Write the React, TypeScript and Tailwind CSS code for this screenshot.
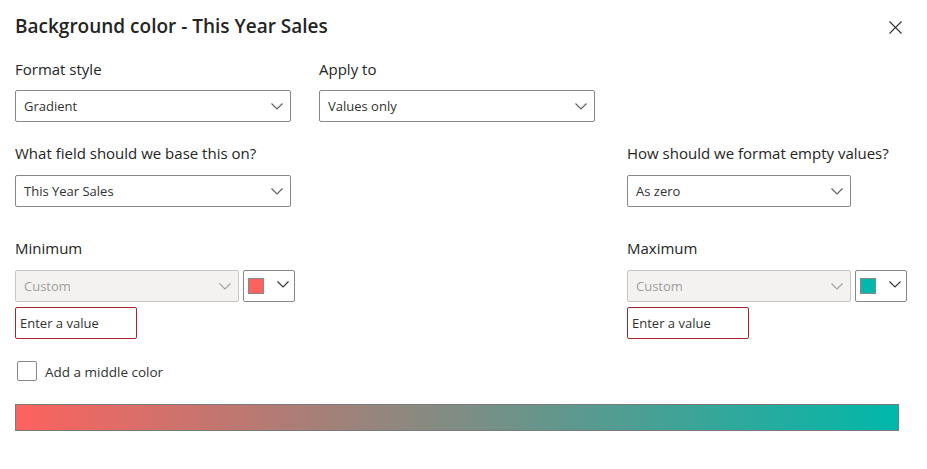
const Chevron = ({ color = "#605e5c" }: { color?: string }) => (
    <svg width="12" height="7" viewBox="0 0 12 7" fill="none">
        <path d="M0.5 0.5 L6 6 L11.5 0.5" stroke={color} strokeWidth="1.1" />
    </svg>
)

const Dropdown = ({ value, width }: { value: string, width: string }) => (
    <div className={`${width} h-[32px] flex items-center justify-between border border-[#8a8886] rounded-[2px] bg-white pl-[8px] pr-[7px]`}>
        <span className="pt-[2px] text-[13px] text-[#323130]">{value}</span>
        <Chevron />
    </div>
)

const ColorGroup = ({ color }: { color: string }) => (
    <div className="flex gap-[4px]">
        <div className="w-[224px] h-[32px] flex items-center justify-between border border-[#c8c6c4] rounded-[2px] bg-[#f3f2f1] pl-[8px] pr-[7px]">
            <span className="pt-[2px] text-[13px] text-[#a19f9d]">Custom</span>
            <Chevron color="#a19f9d" />
        </div>
        <div className="w-[52px] h-[32px] flex items-start border border-[#8a8886] rounded-[2px] bg-white pl-[4px] pt-[7px] pr-[5px] justify-between">
            <div className={`w-[16px] h-[16px] border border-[#8a8886] ${color}`} />
            <div className="pt-[3px]">
                <Chevron color="#323130" />
            </div>
        </div>
    </div>
)

const ValueInput = () => (
    <div className="mt-[5px] w-[122px] h-[32px] flex items-center border border-[#a4262c] rounded-[2px] pl-[4px]">
        <span className="pt-[2px] text-[13px] text-[#323130]">Enter a value</span>
    </div>
)

export default function App() {
    return (
        <div
            className="w-[927px] h-[469px] bg-white px-[15px] pt-[12px] text-[#252423]"
            style={{ fontFamily: '"Open Sans", "Noto Sans", sans-serif' }}
        >
            {/* Header */}
            <div className="h-[28px] flex items-center justify-between">
                <h1 className="text-[19px] font-semibold leading-[28px] text-[#252423]">
                    Background color - This Year Sales
                </h1>
                <svg width="13" height="13" viewBox="0 0 13 13" className="mr-[10px] mt-[2px]">
                    <path d="M0.5 0.5 L12.5 12.5 M12.5 0.5 L0.5 12.5" stroke="#323130" strokeWidth="1.1" />
                </svg>
            </div>

            {/* Format style / Apply to */}
            <div className="mt-[18px] flex gap-[28px]">
                <div>
                    <div className="text-[15px] leading-[22px]">Format style</div>
                    <div className="mt-[10px]">
                        <Dropdown value="Gradient" width="w-[276px]" />
                    </div>
                </div>
                <div>
                    <div className="text-[15px] leading-[22px]">Apply to</div>
                    <div className="mt-[10px]">
                        <Dropdown value="Values only" width="w-[276px]" />
                    </div>
                </div>
            </div>

            {/* Field / empty values */}
            <div className="mt-[20px] flex">
                <div className="w-[612px]">
                    <div className="text-[15px] leading-[22px]">What field should we base this on?</div>
                    <div className="mt-[11px]">
                        <Dropdown value="This Year Sales" width="w-[276px]" />
                    </div>
                </div>
                <div>
                    <div className="text-[15px] leading-[22px]">How should we format empty values?</div>
                    <div className="mt-[11px]">
                        <Dropdown value="As zero" width="w-[224px]" />
                    </div>
                </div>
            </div>

            {/* Minimum / Maximum */}
            <div className="mt-[30px] flex">
                <div className="w-[612px]">
                    <div className="text-[15px] leading-[22px]">Minimum</div>
                    <div className="mt-[11px]">
                        <ColorGroup color="bg-[#fd625e]" />
                    </div>
                    <ValueInput />
                </div>
                <div>
                    <div className="text-[15px] leading-[22px]">Maximum</div>
                    <div className="mt-[11px]">
                        <ColorGroup color="bg-[#01b8aa]" />
                    </div>
                    <ValueInput />
                </div>
            </div>

            {/* Middle color */}
            <div className="mt-[22px] h-[20px] flex items-center pl-[2px]">
                <div className="w-[20px] h-[20px] border border-[#8a8886] rounded-[2px] bg-white" />
                <span className="ml-[8px] pt-[2px] text-[13.5px] text-[#323130]">Add a middle color</span>
            </div>

            {/* Gradient preview */}
            <div className="mt-[23px] w-[884px] h-[27px] border border-[#7a7a7a] bg-linear-to-r/srgb from-[#fd625e] to-[#01b8aa]" />
        </div>
    )
}
